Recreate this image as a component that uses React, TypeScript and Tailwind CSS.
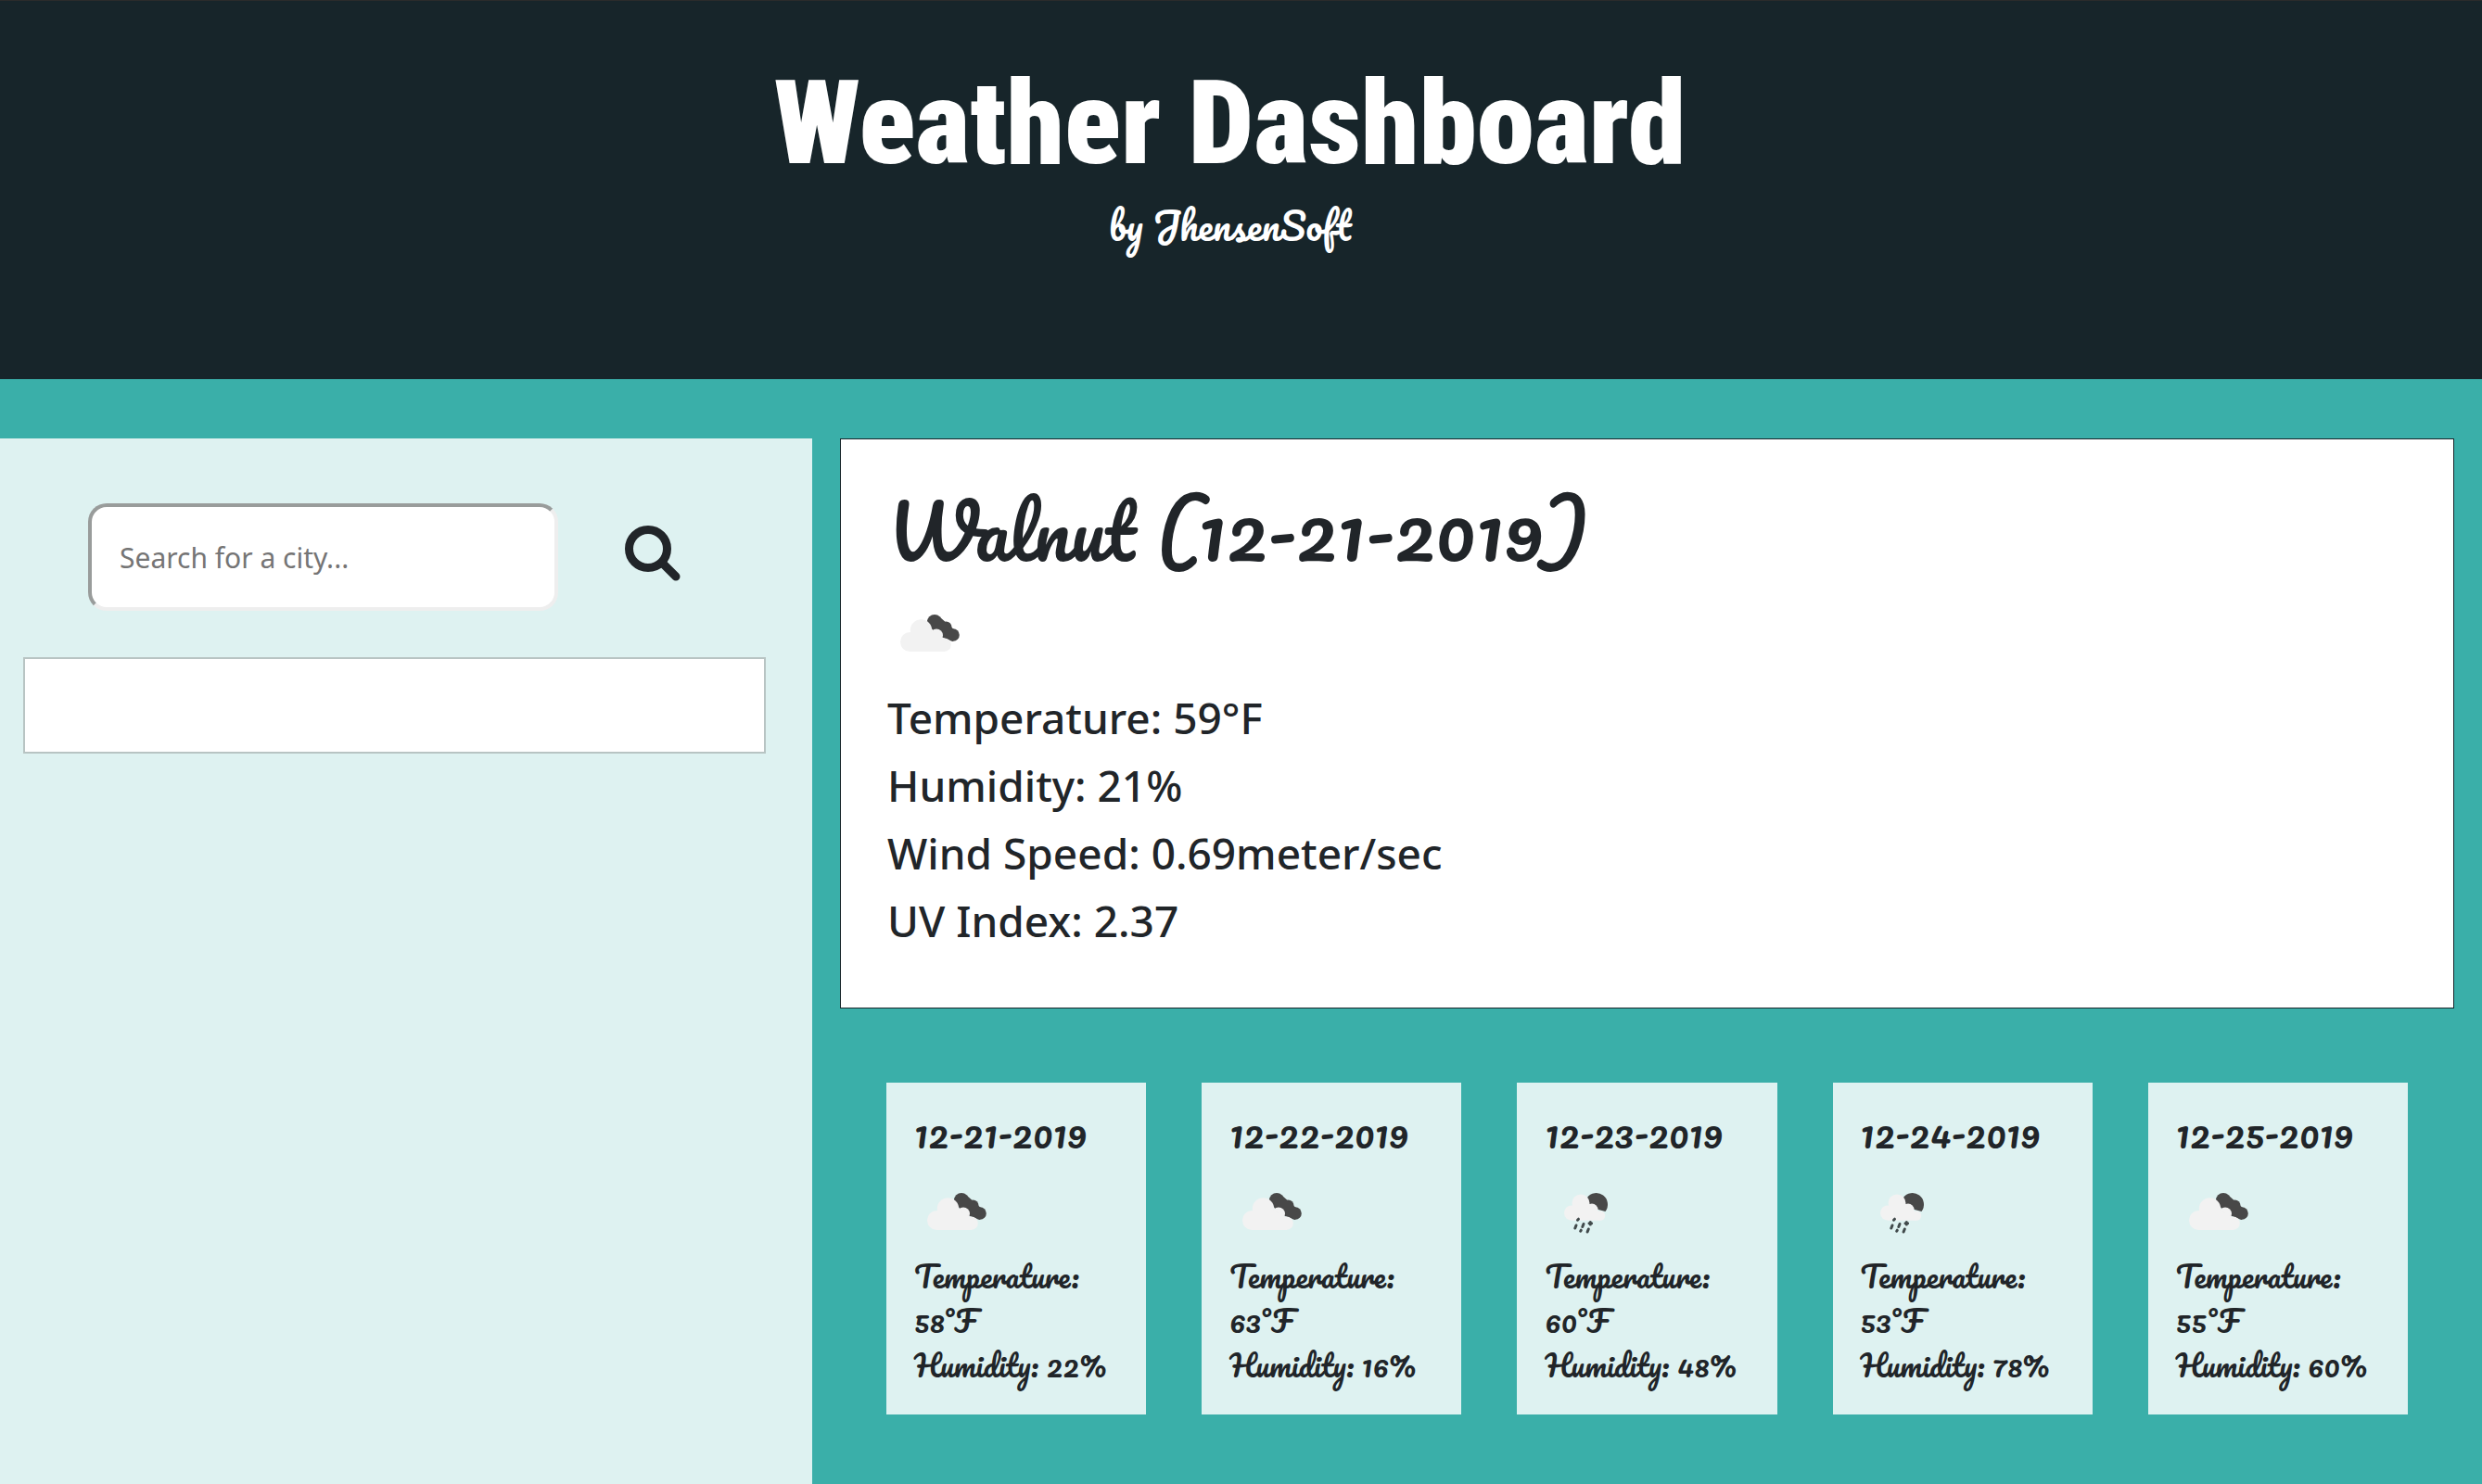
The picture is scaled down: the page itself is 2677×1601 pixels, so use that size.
type IconKind = "clouds" | "rain";

interface Forecast {
  date: string;
  icon: IconKind;
  temperature: number;
  humidity: number;
}

const forecasts: Forecast[] = [
  { date: "12-21-2019", icon: "clouds", temperature: 58, humidity: 22 },
  { date: "12-22-2019", icon: "clouds", temperature: 63, humidity: 16 },
  { date: "12-23-2019", icon: "rain", temperature: 60, humidity: 48 },
  { date: "12-24-2019", icon: "rain", temperature: 53, humidity: 78 },
  { date: "12-25-2019", icon: "clouds", temperature: 55, humidity: 60 },
];

const readings = [
  "Temperature: 59°F",
  "Humidity: 21%",
  "Wind Speed: 0.69meter/sec",
  "UV Index: 2.37",
];

function WeatherIcon({ kind }: { kind: IconKind }) {
  if (kind === "rain") {
    return (
      <svg viewBox="0 0 88 88" className="size-[88px]" role="img" aria-label="Rain">
        <path
          d="M45.700 28A11.400 11.400 0 1 1 65.500 43L58 41L47 34Z"
          fill="#484848"
        />
        <g fill="#f2f2f2">
          <circle cx="29" cy="44.500" r="8" />
          <circle cx="39" cy="34" r="9.500" />
          <circle cx="51" cy="41" r="6.500" />
          <circle cx="60" cy="47.500" r="5.200" />
          <path d="M29 38h22l9 6v8.700H29z" />
        </g>
        <g stroke="#414a4b" strokeWidth="3" strokeLinecap="round">
          <path d="M36.500 51.200l-1 1M34 58l-1.200 3M42 56.500l-1.200 3M48 55.700h2.600M49.300 54.500v2.400M39.300 63.200l-.6 1M47.300 62l-1.200 3" />
        </g>
      </svg>
    );
  }
  return (
    <svg viewBox="0 0 88 88" className="size-[88px]" role="img" aria-label="Broken clouds">
      <g fill="#484848">
        <circle cx="51" cy="31" r="8" />
        <circle cx="63.500" cy="36.500" r="6" />
        <circle cx="71" cy="45" r="6.800" />
        <path d="M43 29L57 26L73 40L71 52L52 45Z" />
      </g>
      <g fill="#f2f2f2">
        <circle cx="24.500" cy="52.500" r="10.500" />
        <circle cx="36.500" cy="40" r="11.700" />
        <circle cx="53" cy="45.500" r="7" />
        <circle cx="61.500" cy="55.700" r="7.300" />
        <path d="M24 44L46 35L48 42L62 50V63H24Z" />
      </g>
    </svg>
  );
}

function SearchIcon() {
  return (
    <svg viewBox="0 0 60 60" className="size-[60px]" aria-hidden="true">
      <circle cx="25" cy="25" r="20.500" fill="none" stroke="#212529" strokeWidth="9" />
      <path d="M41 41L55 55" stroke="#212529" strokeWidth="9" strokeLinecap="round" />
    </svg>
  );
}

function ForecastCard({ forecast }: { forecast: Forecast }) {
  return (
    <article className="h-[358px] flex-1 bg-[#def2f1] px-[30px] pt-[30px] font-['Pacifico',cursive] text-[#212529]">
      <h3 className="text-[40px] leading-[48px]">{forecast.date}</h3>
      <div className="pt-[18px]">
        <WeatherIcon kind={forecast.icon} />
      </div>
      <p className="text-[32px] leading-[48px]">
        Temperature:
        <br />
        {forecast.temperature}°F
      </p>
      <p className="text-[32px] leading-[48px] whitespace-nowrap">Humidity: {forecast.humidity}%</p>
    </article>
  );
}

export default function App() {
  return (
    <div className="flex min-h-screen flex-col bg-[#3aafa9] font-['Noto_Sans',sans-serif]">
      <header className="h-[409px] border-t border-[#2b2b2b] bg-[#17252a] pt-[62px] pr-6 text-center text-white">
        <h1 className="font-['Roboto_Condensed','Roboto',sans-serif] text-[126px] leading-[140px] font-black">
          Weather Dashboard
        </h1>
        <p className="mt-2 font-['Pacifico',cursive] text-[40px] leading-[64px]">by JhensenSoft</p>
      </header>

      <div className="flex flex-1 gap-[30px] pt-16 pr-[30px]">
        <aside className="w-1/3 max-w-[876px] bg-[#def2f1] pt-[70px]">
          <form className="flex items-center gap-[72px] pl-[95px]" onSubmit={(e) => e.preventDefault()}>
            <input
              type="text"
              aria-label="Search for a city"
              placeholder="Search for a city..."
              className="h-[116px] w-[507px] rounded-[20px] border-4 border-t-[#999c9b] border-r-[#eeeeee] border-b-[#eeeeee] border-l-[#999c9b] bg-white px-[30px] text-[30px] text-[#212529] placeholder:text-[#757575]"
            />
            <button type="submit" aria-label="Search" className="pb-2">
              <SearchIcon />
            </button>
          </form>
          <ul className="mt-[50px] mr-[50px] ml-[25px]">
            <li className="h-[104px] border-2 border-[#b8c4c3] bg-white" />
          </ul>
        </aside>

        <main className="min-w-0 flex-1">
          <section className="h-[615px] border border-[#17252a] bg-white px-[50px] pt-[50px] text-[#212529]">
            <h2 className="font-['Pacifico',cursive] text-[80px] leading-[96px]">
              Walnut (12-21-2019)
            </h2>
            <div className="pt-5">
              <WeatherIcon kind="clouds" />
            </div>
            <div className="mt-[10px] text-[46px] leading-[73px] font-medium">
              {readings.map((reading) => (
                <p key={reading}>{reading}</p>
              ))}
            </div>
          </section>
          <section aria-label="Forecast" className="mt-20 flex gap-[60px] px-[50px]">
            {forecasts.map((forecast) => (
              <ForecastCard key={forecast.date} forecast={forecast} />
            ))}
          </section>
        </main>
      </div>
    </div>
  );
}
